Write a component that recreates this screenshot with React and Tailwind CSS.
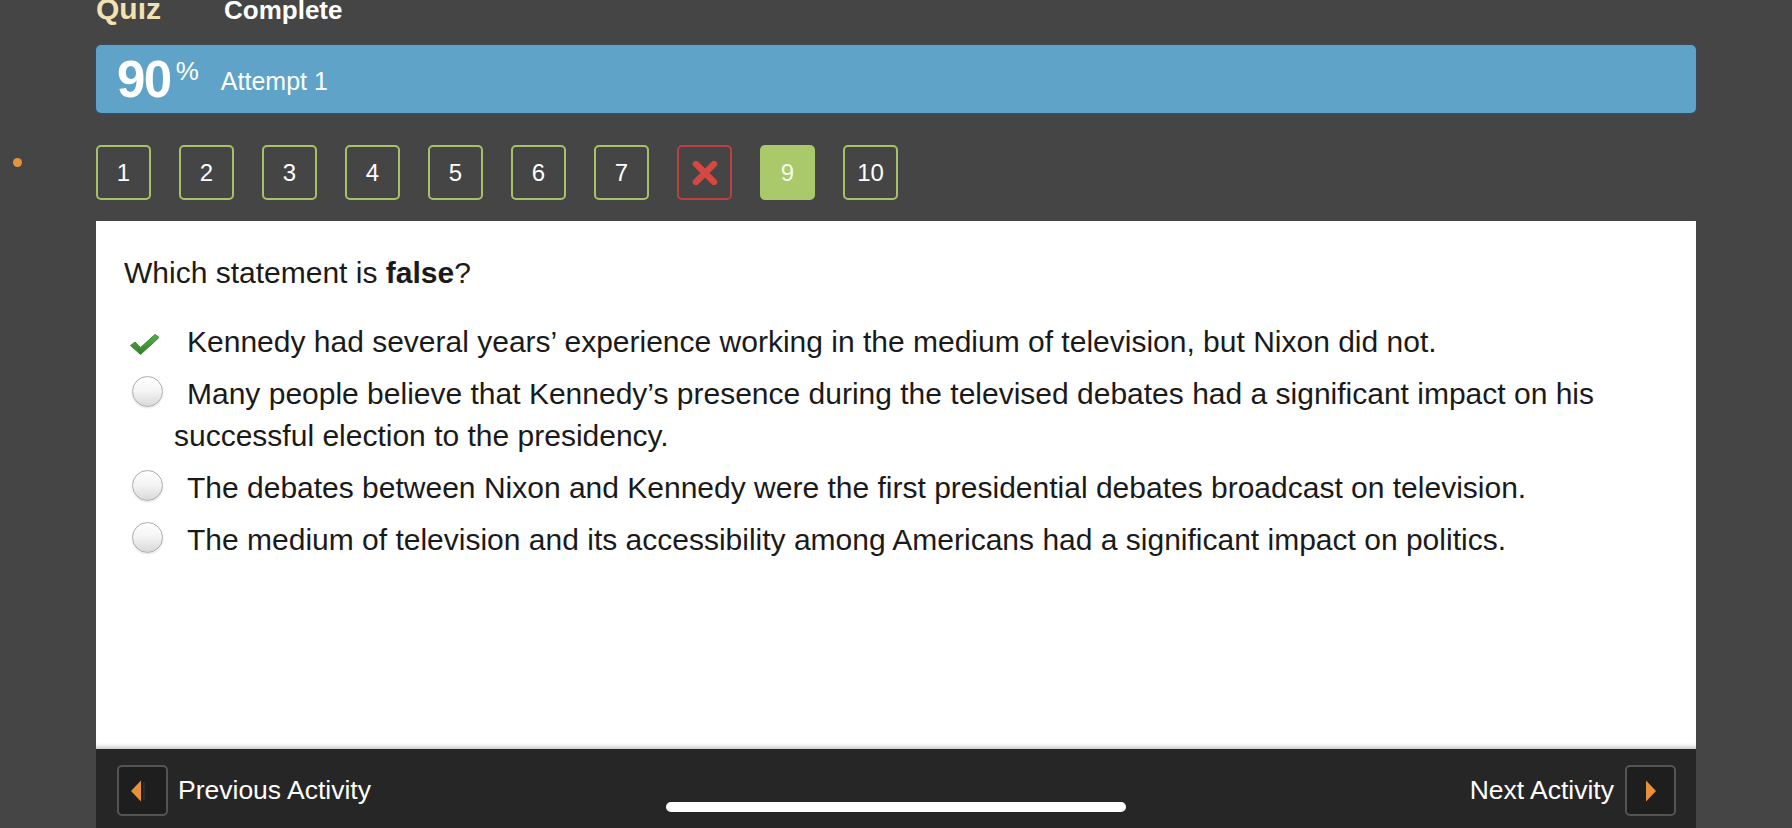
import React from 'react';

const questions = [
  { n: '1', state: 'done' },
  { n: '2', state: 'done' },
  { n: '3', state: 'done' },
  { n: '4', state: 'done' },
  { n: '5', state: 'done' },
  { n: '6', state: 'done' },
  { n: '7', state: 'done' },
  { n: '8', state: 'wrong' },
  { n: '9', state: 'current' },
  { n: '10', state: 'done' },
];

const answers = [
  { text: 'Kennedy had several years\u2019 experience working in the medium of television, but Nixon did not.', checked: true },
  { text: 'Many people believe that Kennedy\u2019s presence during the televised debates had a significant impact on his successful election to the presidency.' },
  { text: 'The debates between Nixon and Kennedy were the first presidential debates broadcast on television.' },
  { text: 'The medium of television and its accessibility among Americans had a significant impact on politics.' },
];

function QuestionBox({ n, state }) {
  if (state === 'wrong') {
    return (
      <div className="w-[55px] h-[55px] rounded-[5px] border-2 border-[#b9413f] flex items-center justify-center">
        <svg width="26" height="24" viewBox="0 0 26 24">
          <path d="M4 3 L22 21 M22 3 L4 21" stroke="#d44841" strokeWidth="6.5" strokeLinecap="round" />
        </svg>
      </div>
    );
  }
  if (state === 'current') {
    return (
      <div className="w-[55px] h-[55px] rounded-[5px] bg-[#a9c96b] flex items-center justify-center text-[24px] text-[#f5f9e8]">
        {n}
      </div>
    );
  }
  return (
    <div className="w-[55px] h-[55px] rounded-[5px] border-2 border-[#a6c168] flex items-center justify-center text-[24px] text-white">
      {n}
    </div>
  );
}

function Radio() {
  return (
    <div className="mt-[3px] ml-[1px] w-[31px] h-[31px] rounded-full border border-[#adadad] bg-gradient-to-b from-white via-[#f3f3f3] to-[#d9d9d9] shadow-[inset_0_1px_1px_rgba(255,255,255,0.9),0_1px_2px_rgba(0,0,0,0.12)]" />
  );
}

function Check() {
  return (
    <svg className="mt-[12px] -ml-[2px]" width="32" height="23" viewBox="0 0 32 23">
      <defs>
        <linearGradient id="chk" x1="0" y1="0" x2="0" y2="1">
          <stop offset="0" stopColor="#5aae4a" />
          <stop offset="1" stopColor="#2f7f27" />
        </linearGradient>
      </defs>
      <path d="M1.5 12.5 L6 9 L11.5 14.5 L26 1.5 L30 4.5 L11.5 21.5 Z" fill="url(#chk)" strokeLinejoin="round" stroke="#3a8a30" strokeWidth="1" />
    </svg>
  );
}

function NavButton({ dir }) {
  return (
    <div className="w-[51px] h-[51px] rounded-[5px] border-2 border-[#545454] bg-[#1e1e1e] flex items-center justify-center">
      {dir === 'prev' ? (
        <svg width="24" height="24" viewBox="0 0 24 24" className="-ml-[4px]">
          <path d="M12 1.5 L12 22.5 L2 12 Z" fill="#e8913a" />
          <rect x="14" y="3" width="2" height="18" fill="#2c2c2c" />
        </svg>
      ) : (
        <svg width="24" height="24" viewBox="0 0 24 24">
          <path d="M7 1.5 L7 22.5 L17 12 Z" fill="#e8913a" />
        </svg>
      )}
    </div>
  );
}

export default function App() {
  return (
    <div
      className="relative min-h-screen h-[828px] overflow-hidden bg-[#454545]"
      style={{ fontFamily: '"Liberation Sans", Arial, Helvetica, sans-serif' }}
    >
      {/* little orange dot on the left edge */}
      <div className="absolute left-[13px] top-[158px] w-[9px] h-[9px] rounded-full bg-[#e4943c]" />

      <div className="mx-[96px]">
        {/* Header */}
        <div className="h-[45px] flex items-start">
          <div className="-mt-[5px] flex items-baseline font-bold leading-[28px]">
            <span className="text-[30px] text-[#f1e3b1]">Quiz</span>
            <span className="ml-[63px] text-[26px] text-white">Complete</span>
          </div>
        </div>

        {/* Score bar */}
        <div className="h-[68px] rounded-[5px] bg-[#5fa4c8] shadow-[0_0_0_2px_#3d4a53] flex items-start pl-[21px] text-white">
          <span className="mt-[9px] text-[51px] font-bold leading-[51px] tracking-[-1.5px]">90</span>
          <span className="mt-[13px] ml-[5px] text-[26px] leading-[26px]">%</span>
          <span className="mt-[24px] ml-[22px] text-[25px] leading-[25px]">Attempt 1</span>
        </div>

        {/* Question nav */}
        <div className="mt-[32px] flex gap-[28px]">
          {questions.map((q) => (
            <QuestionBox key={q.n} n={q.n} state={q.state} />
          ))}
        </div>

        {/* Question panel */}
        <div className="mt-[21px] h-[528px] bg-white pl-[28px] pr-[28px] pt-[31px] text-[#1a1a1a] shadow-[inset_0_-5px_4px_-3px_rgba(0,0,0,0.25)]">
          <p className="text-[30px] leading-[42px]">
            Which statement is <b>false</b>?
          </p>
          <div className="mt-[27px] flex flex-col gap-[10px]">
            {answers.map((a, i) => (
              <div key={i} className="flex items-start">
                <div className="w-[50px] shrink-0 pl-[7px] flex">
                  {a.checked ? <Check /> : <Radio />}
                </div>
                <p className="text-[30px] leading-[42px] indent-[13px]">{a.text}</p>
              </div>
            ))}
          </div>
        </div>

        {/* Footer nav */}
        <div className="h-[90px] bg-[#262626] flex items-start justify-between pt-[16px] pl-[21px] pr-[20px] text-white text-[26.5px]">
          <div className="flex items-center gap-[10px]">
            <NavButton dir="prev" />
            <span>Previous Activity</span>
          </div>
          <div className="flex items-center gap-[11px]">
            <span>Next Activity</span>
            <NavButton dir="next" />
          </div>
        </div>
      </div>

      {/* home indicator */}
      <div className="absolute left-[666px] top-[802px] w-[460px] h-[10px] rounded-full bg-white" />
    </div>
  );
}
